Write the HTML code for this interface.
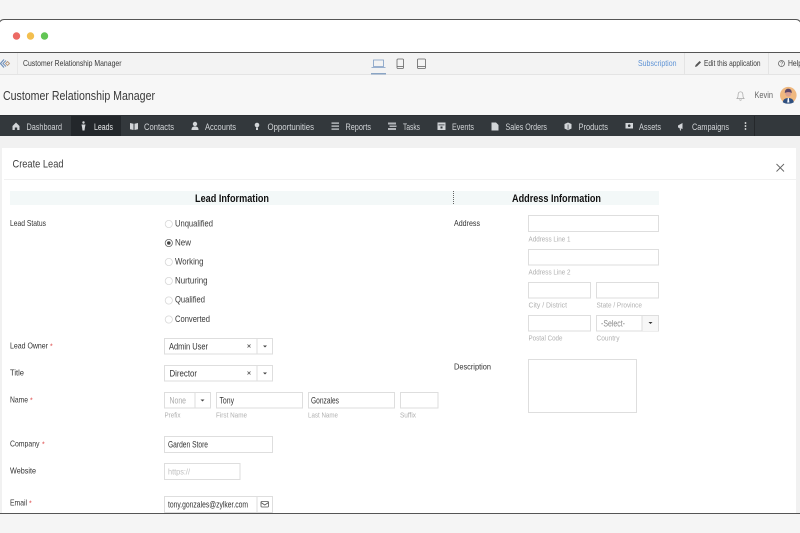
<!DOCTYPE html>
<html><head><meta charset="utf-8"><title>Customer Relationship Manager</title>
<style>
html,body{margin:0;padding:0;background:#f5f5f5;width:800px;height:533px;overflow:hidden}
svg{display:block;filter:blur(.3px)}
text{font-family:"Liberation Sans",sans-serif;font-size:9px;fill:#3a3a3a}
.nav{fill:#d2d5d8;font-size:9px}
.lb{fill:#333;font-size:8.500px}
.hint{fill:#b0b0b0;font-size:7.500px}
.val{fill:#333;font-size:9px}
.opt{fill:#3a3a3a;font-size:9px}
.box{fill:#fff;stroke:#dedede;stroke-width:1}
.hd{fill:#111;font-size:11px;font-weight:bold}
.ic{fill:#d2d5d8}
.st{fill:none;stroke:#666;stroke-width:.8}
.star{fill:#d44;font-size:7px}
</style></head><body>
<svg width="800" height="533" viewBox="0 0 800 533" xmlns="http://www.w3.org/2000/svg">
<rect width="800" height="533" fill="#f5f5f5"/>
<rect x="-1" y="19.500" width="802" height="494" rx="5" fill="#fff" stroke="#555" stroke-width="1"/>
<circle cx="16.500" cy="36" r="3.700" fill="#ec6a64"/><circle cx="30.500" cy="36" r="3.700" fill="#f3bf4f"/><circle cx="44.500" cy="36" r="3.700" fill="#62c554"/>
<rect x="0" y="52" width="800" height="1" fill="#555"/>
<rect x="0" y="53" width="800" height="21" fill="#f3f3f3"/><rect x="0" y="74" width="800" height="1" fill="#e4e4e4"/>
<rect x="17" y="53" width="1" height="21" fill="#e8e8e8"/><rect x="684" y="53" width="1" height="21" fill="#e4e4e4"/><rect x="768" y="53" width="1" height="21" fill="#e4e4e4"/>
<path d="M4 59.500 .5 63.500 4 67.500" fill="none" stroke="#6f8fb8" stroke-width="1.200"/><path d="M6 60.500 3 63.500 6 66.500" fill="none" stroke="#6f8fb8" stroke-width="1"/><path d="M7.500 61.500 9.500 63.500 7.500 65.500 5.500 63.500z" fill="none" stroke="#b5977c" stroke-width=".9"/>
<text x="23" y="66" textLength="98.500" lengthAdjust="spacingAndGlyphs" style="font-size:8.500px">Customer Relationship Manager</text>
<path d="M373.500 60h10v6.500h-10zM371.500 67.500h14" fill="none" stroke="#7d9cc4" stroke-width=".8"/><rect x="371" y="73" width="15" height="1.500" fill="#8aa5c5"/>
<rect x="397" y="59" width="6.500" height="9.500" rx="1" class="st"/><path d="M397 66.500h6.500" class="st"/>
<rect x="417.500" y="59" width="8" height="9.500" rx="1" class="st"/><path d="M417.500 66.500h8" class="st"/>
<text x="638" y="66" textLength="38.500" lengthAdjust="spacingAndGlyphs" style="fill:#5f94d6;font-size:8.500px">Subscription</text>
<path d="M695 67l.6-2 4-4 1.400 1.400-4 4z" fill="#555"/>
<text x="704" y="66" textLength="56.500" lengthAdjust="spacingAndGlyphs" style="fill:#3a3a3a;font-size:8.500px">Edit this application</text>
<circle cx="781.500" cy="63.500" r="3" class="st"/><text x="780.300" y="65.500" style="font-size:5px">?</text>
<text x="788" y="66" textLength="14" lengthAdjust="spacingAndGlyphs" style="font-size:8.500px">Help</text>
<rect x="0" y="75" width="800" height="40" fill="#f7f7f7"/>
<text x="3" y="100" textLength="152" lengthAdjust="spacingAndGlyphs" style="font-size:12.500px;fill:#3a3a3a">Customer Relationship Manager</text>
<path d="M737 98.500c1.300-1 1-2.500 1.100-4 .1-1.600 1.100-2.700 2.400-2.700s2.300 1.100 2.400 2.700c.1 1.500-.2 3 1.100 4zM739.500 99.500c.3 1 1.700 1 2 0" fill="none" stroke="#a5a5a5" stroke-width=".7"/>
<text x="754.500" y="98" textLength="18.500" lengthAdjust="spacingAndGlyphs" style="fill:#666;font-size:9px">Kevin</text>
<circle cx="788.300" cy="95.200" r="8.300" fill="#efb87f"/><path d="M782.800 102.200c.5-3.300 3-4.200 5.500-4.200s5 .9 5.500 4.200c-1.500 1-3.200 1.400-5.500 1.400s-4-.4-5.500-1.400z" fill="#2f4f7f"/><circle cx="788.300" cy="93.500" r="3.100" fill="#d99f90"/><path d="M784.800 93c0-3.200 1.500-4.300 3.500-4.300s3.500 1.100 3.500 4.300c-2-1.200-5-1.200-7 0z" fill="#5a4668"/><path d="M787.800 98h1l.6 4.500h-2.200z" fill="#fff"/>
<rect x="0" y="115" width="800" height="21" fill="#33383c"/><rect x="0" y="115" width="800" height="1" fill="#2b2f33"/>
<rect x="71" y="116" width="50" height="20" fill="#23272b"/>
<rect x="754" y="116" width="1" height="20" fill="#25282b"/>
<path d="M12.500 126 16 122.500l3.500 3.500v4h-2.300v-2.500h-2.400v2.500h-2.300z" class="ic"/>
<text class="nav" x="26.500" y="130" textLength="35.500" lengthAdjust="spacingAndGlyphs">Dashboard</text>
<circle cx="83.500" cy="122.500" r="1.200" class="ic"/><path d="M81.500 124.500h4l-.6 3-.4 3h-2l-.4-3z" class="ic"/>
<text x="94" y="130" textLength="19" lengthAdjust="spacingAndGlyphs" style="fill:#e6e8ea;font-size:9px">Leads</text>
<path d="M130 123l3.500.7v6.300l-3.500-.7zM134.500 123.700l3.500-.7v6.300l-3.500.7z" class="ic"/>
<text class="nav" x="144" y="130" textLength="30" lengthAdjust="spacingAndGlyphs">Contacts</text>
<circle cx="195" cy="124" r="2.200" class="ic"/><path d="M191.500 130c0-3 1.500-3.500 3.500-3.500s3.500.5 3.500 3.500z" class="ic"/>
<text class="nav" x="205" y="130" textLength="31" lengthAdjust="spacingAndGlyphs">Accounts</text>
<circle cx="257" cy="125" r="2.300" class="ic"/><rect x="256" y="127.500" width="2" height="2.500" class="ic"/>
<text class="nav" x="267.500" y="130" textLength="46.500" lengthAdjust="spacingAndGlyphs">Opportunities</text>
<rect x="331.500" y="122.500" width="7.500" height="1.200" class="ic"/><rect x="331.500" y="125.500" width="7.500" height="1.200" class="ic"/><rect x="331.500" y="128.500" width="7.500" height="1.200" class="ic"/>
<text class="nav" x="345.500" y="130" textLength="25.500" lengthAdjust="spacingAndGlyphs">Reports</text>
<path d="M388 122.500h8v2h-8zM389.500 125.500h7v1.500h-7zM388 128h8v2h-8z" class="ic" opacity=".8"/>
<text class="nav" x="403" y="130" textLength="17" lengthAdjust="spacingAndGlyphs">Tasks</text>
<path d="M437.500 122.500h8v7.500h-8z" class="ic"/><rect x="438.500" y="124.500" width="6" height=".8" fill="#33383c"/><rect x="440.500" y="126.500" width="2" height="2" fill="#33383c"/>
<text class="nav" x="452" y="130" textLength="22" lengthAdjust="spacingAndGlyphs">Events</text>
<path d="M491.500 122.500h4.500l2.500 2.500v5.500h-7z" class="ic"/>
<text class="nav" x="505.500" y="130" textLength="41.500" lengthAdjust="spacingAndGlyphs">Sales Orders</text>
<path d="M564.500 124l3.500-1.500 3.500 1.500v4.500l-3.500 1.700-3.500-1.700z" class="ic"/><rect x="567.700" y="124.500" width=".7" height="5" fill="#33383c"/>
<text class="nav" x="578.500" y="130" textLength="29.500" lengthAdjust="spacingAndGlyphs">Products</text>
<rect x="625.500" y="123" width="7.500" height="5.500" class="ic"/><circle cx="629.200" cy="125.700" r="1.300" fill="#33383c"/>
<text class="nav" x="639" y="130" textLength="22" lengthAdjust="spacingAndGlyphs">Assets</text>
<path d="M678 125.500l4.500-2.500v6l-4.500-1.500zM679.500 128l1.300.5.3 2h-1z" class="ic"/>
<text class="nav" x="692" y="130" textLength="37" lengthAdjust="spacingAndGlyphs">Campaigns</text>
<circle cx="745.500" cy="123" r=".9" fill="#eee"/><circle cx="745.500" cy="126" r=".9" fill="#eee"/><circle cx="745.500" cy="129" r=".9" fill="#eee"/>
<rect x="0" y="136" width="800" height="12" fill="#f1f1f1"/>
<rect x="0" y="148" width="2" height="365" fill="#f1f1f1"/><rect x="796" y="148" width="4" height="365" fill="#f1f1f1"/>
<rect x="2" y="148" width="794" height="365" fill="#fff"/>
<rect x="0" y="513" width="800" height="1" fill="#555"/>
<text x="12.500" y="167.500" textLength="51" lengthAdjust="spacingAndGlyphs" style="font-size:11px;fill:#3f3f3f">Create Lead</text>
<rect x="4" y="179" width="792" height="1" fill="#f1f1f1"/>
<path d="M776.500 164 784 171.500M784 164 776.500 171.500" stroke="#666" stroke-width=".9"/>
<rect x="10" y="191" width="649" height="14" fill="#f3f8f8"/>
<path d="M453.500 191v14" stroke="#666" stroke-width="1" stroke-dasharray="1 1"/>
<text class="hd" x="195" y="202" textLength="74" lengthAdjust="spacingAndGlyphs">Lead Information</text>
<text class="hd" x="512" y="202" textLength="89" lengthAdjust="spacingAndGlyphs">Address Information</text>
<text class="lb" x="10" y="226" textLength="36" lengthAdjust="spacingAndGlyphs">Lead Status</text>
<g fill="#fff" stroke="#d8d8d8" stroke-width=".8">
<circle cx="168.800" cy="224" r="3.600"/><circle cx="168.800" cy="243" r="3.600" stroke="#666"/><circle cx="168.800" cy="262" r="3.600"/><circle cx="168.800" cy="281" r="3.600"/><circle cx="168.800" cy="300.500" r="3.600"/><circle cx="168.800" cy="319.500" r="3.600"/>
</g><circle cx="168.800" cy="243" r="1.800" fill="#444"/>
<text class="opt" x="175" y="226.500" textLength="38" lengthAdjust="spacingAndGlyphs">Unqualified</text>
<text class="opt" x="175" y="245.500" textLength="16" lengthAdjust="spacingAndGlyphs">New</text>
<text class="opt" x="175" y="264.500" textLength="28.500" lengthAdjust="spacingAndGlyphs">Working</text>
<text class="opt" x="175" y="283.500" textLength="32.500" lengthAdjust="spacingAndGlyphs">Nurturing</text>
<text class="opt" x="175" y="302.500" textLength="30" lengthAdjust="spacingAndGlyphs">Qualified</text>
<text class="opt" x="175" y="322" textLength="35" lengthAdjust="spacingAndGlyphs">Converted</text>
<text class="lb" x="10" y="348.500" textLength="38" lengthAdjust="spacingAndGlyphs">Lead Owner</text><text class="star" x="50" y="348.500">*</text>
<rect class="box" x="164.500" y="338.500" width="108" height="15.500"/><rect x="256.500" y="339" width="1" height="15" fill="#dedede"/>
<text class="val" x="169" y="349.500" textLength="39" lengthAdjust="spacingAndGlyphs">Admin User</text>
<path d="M247.500 344.500l3 3M250.500 344.500l-3 3" stroke="#555" stroke-width=".8"/><path d="M263 345.500h4l-2 2z" fill="#444"/>
<text class="lb" x="10" y="375.500" textLength="14" lengthAdjust="spacingAndGlyphs">Title</text>
<rect class="box" x="164.500" y="365.500" width="108" height="15.500"/><rect x="256.500" y="366" width="1" height="15" fill="#dedede"/>
<text class="val" x="169.500" y="376.500" textLength="27.500" lengthAdjust="spacingAndGlyphs">Director</text>
<path d="M247.500 371.500l3 3M250.500 371.500l-3 3" stroke="#555" stroke-width=".8"/><path d="M263 372.500h4l-2 2z" fill="#444"/>
<text class="lb" x="10" y="402.500" textLength="18" lengthAdjust="spacingAndGlyphs">Name</text><text class="star" x="30" y="402.500">*</text>
<rect class="box" x="164.500" y="392.500" width="46" height="15.500"/><rect x="194.500" y="393" width="1" height="15" fill="#dedede"/>
<text x="169.500" y="403.500" textLength="16.500" lengthAdjust="spacingAndGlyphs" style="fill:#aaa;font-size:9px">None</text><path d="M200.500 399.500h4l-2 2z" fill="#444"/>
<rect class="box" x="216.500" y="392.500" width="86" height="15.500"/><text class="val" x="219.500" y="403.500" textLength="14.500" lengthAdjust="spacingAndGlyphs">Tony</text>
<rect class="box" x="308.500" y="392.500" width="86" height="15.500"/><text class="val" x="311" y="403.500" textLength="28" lengthAdjust="spacingAndGlyphs">Gonzales</text>
<rect class="box" x="400.500" y="392.500" width="37.500" height="15.500"/>
<text class="hint" x="164.500" y="417.500" textLength="16" lengthAdjust="spacingAndGlyphs">Prefix</text>
<text class="hint" x="216" y="417.500" textLength="31" lengthAdjust="spacingAndGlyphs">First Name</text>
<text class="hint" x="308" y="417.500" textLength="30" lengthAdjust="spacingAndGlyphs">Last Name</text>
<text class="hint" x="400" y="417.500" textLength="16" lengthAdjust="spacingAndGlyphs">Suffix</text>
<text class="lb" x="10" y="446.500" textLength="29.500" lengthAdjust="spacingAndGlyphs">Company</text><text class="star" x="42" y="446.500">*</text>
<rect class="box" x="164.500" y="436.500" width="108" height="16"/><text class="val" x="168" y="447.500" textLength="40" lengthAdjust="spacingAndGlyphs">Garden Store</text>
<text class="lb" x="10" y="473.500" textLength="26" lengthAdjust="spacingAndGlyphs">Website</text>
<rect class="box" x="164.500" y="463.500" width="75.500" height="16"/><text x="168" y="474.500" textLength="22" lengthAdjust="spacingAndGlyphs" style="fill:#c0c0c0;font-size:8.500px">https://</text>
<text class="lb" x="10" y="505.500" textLength="17" lengthAdjust="spacingAndGlyphs">Email</text><text class="star" x="29" y="505.500">*</text>
<rect class="box" x="164.500" y="496.500" width="108" height="16"/><rect x="256.500" y="497" width="1" height="15.500" fill="#dedede"/>
<text class="val" x="168" y="507.500" textLength="80" lengthAdjust="spacingAndGlyphs">tony.gonzales@zylker.com</text>
<rect x="261" y="501.500" width="7.500" height="5.500" rx=".8" fill="none" stroke="#555" stroke-width=".8"/><path d="M261 502.500l3.750 2.500 3.750-2.500" fill="none" stroke="#555" stroke-width=".8"/>
<text class="lb" x="454" y="226" textLength="26" lengthAdjust="spacingAndGlyphs">Address</text>
<rect class="box" x="528.500" y="215.500" width="130" height="16"/><text class="hint" x="528.500" y="241.500" textLength="42" lengthAdjust="spacingAndGlyphs">Address Line 1</text>
<rect class="box" x="528.500" y="249.500" width="130" height="15.500"/><text class="hint" x="528.500" y="274.500" textLength="42" lengthAdjust="spacingAndGlyphs">Address Line 2</text>
<rect class="box" x="528.500" y="282.500" width="62" height="15.500"/><text class="hint" x="528.500" y="307.500" textLength="38.500" lengthAdjust="spacingAndGlyphs">City / District</text>
<rect class="box" x="596.500" y="282.500" width="62" height="15.500"/><text class="hint" x="596.500" y="307.500" textLength="45.500" lengthAdjust="spacingAndGlyphs">State / Province</text>
<rect class="box" x="528.500" y="315.500" width="62" height="15.500"/><text class="hint" x="528.500" y="340.500" textLength="34" lengthAdjust="spacingAndGlyphs">Postal Code</text>
<rect class="box" x="596.500" y="315.500" width="62" height="15.500"/><rect x="642.500" y="316" width="15.500" height="15" fill="#f7f7f7"/><rect x="641.500" y="316" width="1" height="15" fill="#dedede"/>
<text x="601" y="326.500" textLength="24" lengthAdjust="spacingAndGlyphs" style="fill:#888;font-size:9px">-Select-</text><path d="M648.500 322h4l-2 2z" fill="#333"/>
<text class="hint" x="596.500" y="340.500" textLength="23" lengthAdjust="spacingAndGlyphs">Country</text>
<text class="lb" x="454" y="369.500" textLength="37" lengthAdjust="spacingAndGlyphs">Description</text>
<rect class="box" x="528.500" y="359.500" width="108" height="53"/>
</svg>
</body></html>
